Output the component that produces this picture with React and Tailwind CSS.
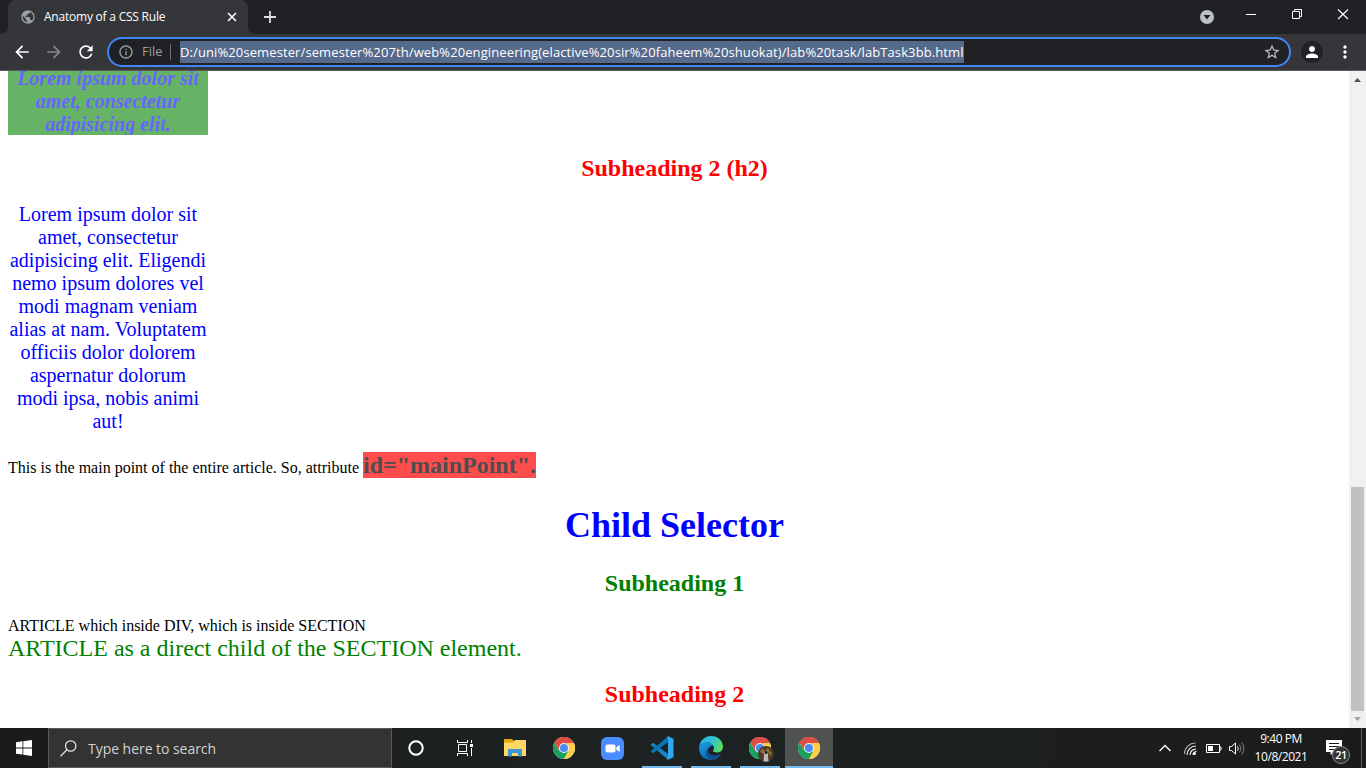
import React from "react";
import { MdArrowBack, MdArrowForward, MdRefresh, MdPublic, MdInfoOutline, MdStarBorder, MdPerson, MdMoreVert } from "react-icons/md";

function ChromeLogo() {
  return (
    <svg width="22" height="22" viewBox="0 0 48 48">
      <circle cx="24" cy="24" r="24" fill="#fff" />
      <path d="M24 24 L3.2 12 A24 24 0 0 1 44.8 12 Z" fill="#dd4f43" />
      <path d="M3.2 12 A24 24 0 0 0 24 48 L34.4 30 L24 24 L13.6 30 Z" fill="#19a15f" />
      <path d="M44.8 12 A24 24 0 0 1 24 48 L34.4 30 L30 13 Z" fill="#ffcd46" />
      <path d="M24 13 H45.3 A24 24 0 0 0 3.2 12 L13.6 30 Z" fill="#dd4f43" />
      <circle cx="24" cy="24" r="11" fill="#f1f1f1" />
      <circle cx="24" cy="24" r="8.8" fill="#4c8bf5" />
    </svg>
  );
}

function CodeLogo() {
  return (
    <svg width="24" height="24" viewBox="0 0 24 24">
      <path d="M1 8.2 L3 6.8 L18 18 V23.7 L1.2 9.2 Z" fill="#1686cb" />
      <path d="M1 15.8 L3 17.2 L18 6 V.3 L1.2 14.8 Z" fill="#0875b9" />
      <path d="M17 .5 L18 .2 L23.5 2.8 V21.2 L18 23.8 L17 23.5 L18 22 V2 Z" fill="#2baaf0" />
    </svg>
  );
}

function EdgeLogo() {
  return (
    <svg width="24" height="24" viewBox="0 0 24 24">
      <defs>
        <linearGradient id="edgeTop" x1="0" y1=".3" x2="1" y2=".6">
          <stop offset="0" stopColor="#2aaee8" />
          <stop offset=".5" stopColor="#2fc5d2" />
          <stop offset="1" stopColor="#62d957" />
        </linearGradient>
        <linearGradient id="edgeLeft" x1="0" y1="0" x2=".6" y2="1">
          <stop offset="0" stopColor="#1b9de2" />
          <stop offset="1" stopColor="#0b63b5" />
        </linearGradient>
      </defs>
      <path d="M.2 11 C1 4 6 0 12 0 C19 0 24 5 24 10.5 C24 14.500 21 16.500 18 16.500 C15.500 16.500 14 15.700 14 15 C14 14.400 15 14 15 12 C15 9 12 6.500 8 6.500 C4 6.500 1.200 9 .2 11 Z" fill="url(#edgeTop)" />
      <path d="M.1 12 C.8 8.500 4 6.500 8 6.500 C11 6.500 13.500 8 14.500 10 C11.500 9 9 11.500 9 14.500 C9 19 14 21.500 21.500 18.500 C19.500 22 16 24 12 24 C5 24 0 19 .1 12 Z" fill="url(#edgeLeft)" />
      <path d="M9 14 C9 19.500 15 21 21.800 17.700 C22.200 17.600 22.300 18 22 18.400 C20 21.500 17 23.500 13.500 23.900 C8 23.500 5 18 8 13.500 C9.300 11.200 12 9.500 14.400 10.300 C11.500 9.800 9 12 9 14 Z" fill="#124f91" />
    </svg>
  );
}

function FolderLogo() {
  return (
    <svg width="22" height="20" viewBox="0 0 22 20">
      <path d="M0 1 H8 L10 3 H22 V18 H0 Z" fill="#e5a50f" />
      <path d="M0 4.500 H9 L11 2 H22 V18 H0 Z" fill="#ffd765" />
      <path d="M4 18.500 V11 H18 V18.500 H14 V15 H8 V18.500 Z" fill="#3e97d5" />
    </svg>
  );
}

function ZoomLogo() {
  return (
    <svg width="23" height="23" viewBox="0 0 23 23">
      <rect width="23" height="23" rx="6" fill="#4a8cff" />
      <rect x="4.500" y="7.500" width="10" height="8" rx="1.800" fill="#fff" />
      <path d="M15.300 10.300 L18.700 7.900 V15.100 L15.300 12.700 Z" fill="#fff" />
    </svg>
  );
}

function TaskItem({ children, open = false }) {
  return (
    <div className="flex h-10 w-[49px] flex-col items-center">
      <div className="flex h-[38px] items-center pt-0.5">{children}</div>
      {open && <div className="h-0.5 w-10 bg-[#76b9ed]" />}
    </div>
  );
}

function TabStrip() {
  return (
    <div className="flex h-[34px] bg-[#202124]">
      <svg width="8" height="34" className="shrink-0"><path d="M0 34 Q8 34 8 26 V34 Z" fill="#35363a" /></svg>
      <div className="flex h-[34px] w-60 items-center rounded-t-lg bg-[#35363a] pl-3">
        <MdPublic className="size-4 text-[#9aa0a6]" />
        <span className="ml-2 w-[175px] whitespace-nowrap text-[12px] tracking-[-0.22px] text-white">Anatomy of a CSS Rule</span>
        <svg width="16" height="16" viewBox="0 0 16 16" className="ml-[5px]" stroke="#fff" strokeWidth="1.600"><path d="M4 4 L12 12 M12 4 L4 12" /></svg>
      </div>
      <svg width="8" height="34" className="shrink-0"><path d="M8 34 Q0 34 0 26 V34 Z" fill="#35363a" /></svg>
      <svg width="14" height="34" className="ml-[7px]" stroke="#dadce0" strokeWidth="1.800"><path d="M1 17 H13 M7 11 V23" /></svg>
      <svg width="166" height="34" className="ml-auto" fill="none">
        <circle cx="7" cy="17" r="7" fill="#bdc1c6" />
        <path d="M3.500 15 H10.500 L7 19.500 Z" fill="#202124" />
        <path d="M46 14.500 H56" stroke="#fff" />
        <path d="M92.500 11.500 H99.500 V18.500 H92.500 Z M94.500 11 V9.500 H101.500 V16.500 H100" stroke="#fff" />
        <path d="M138 9.500 L148 19 M148 9.500 L138 19" stroke="#fff" strokeWidth="1.100" />
      </svg>
    </div>
  );
}

function Toolbar() {
  return (
    <div className="flex h-[37px] items-center border-b border-[#5b5b5f] bg-[#35363a] pl-3">
      <MdArrowBack className="size-5 text-white" />
      <MdArrowForward className="ml-3 size-5 text-[#85868a]" />
      <MdRefresh className="ml-3 size-5 text-white" />
      <div className="ml-[11px] flex h-[30px] w-[1184px] items-center rounded-full border-2 border-[#4285f4] bg-[#202124] pl-[9px]">
        <MdInfoOutline className="size-4 text-[#9aa0a6]" />
        <span className="ml-2 w-[22px] text-[13px] text-[#9aa0a6]">File</span>
        <span className="ml-1.5 h-4 w-px bg-[#6b6e73]" />
        <span className="ml-[9px] h-[22px] w-[784px] whitespace-nowrap bg-[#566a8c] text-[13px] leading-[22px] tracking-[0.105px] text-white">D:/uni%20semester/semester%207th/web%20engineering(elactive%20sir%20faheem%20shuokat)/lab%20task/labTask3bb.html</span>
        <MdStarBorder className="ml-auto mr-2 size-[18px] text-[#bdc1c6]" />
      </div>
      <span className="ml-[10px] flex size-[22px] items-center justify-center rounded-full bg-[#202124]">
        <MdPerson className="size-[18px] text-white" />
      </span>
      <MdMoreVert className="ml-3 size-5 text-white" />
    </div>
  );
}

function Page() {
  return (
    <div className="flex h-[657px] bg-white font-['Liberation_Serif',serif] text-black">
      <main className="h-[657px] w-[1349px] overflow-hidden px-2">
        <div className="h-16 overflow-hidden">
          <p className="-mt-1 w-[200px] bg-[#66b366] text-center text-[20px] font-bold italic leading-[23px] text-[#6666ff]">Lorem ipsum dolor sit amet, consectetur adipisicing elit.</p>
        </div>
        <h2 className="mt-5 text-center text-[24px] font-bold leading-[27px] text-[#ff0000]">Subheading 2 (h2)</h2>
        <p className="mt-[21px] w-[200px] text-center text-[20px] leading-[23px] text-[#0000ff]">Lorem ipsum dolor sit amet, consectetur adipisicing elit. Eligendi nemo ipsum dolores vel modi magnam veniam alias at nam. Voluptatem officiis dolor dolorem aspernatur dolorum modi ipsa, nobis animi aut!</p>
        <p className="mt-[19px] flex h-[26px] items-baseline text-[16px] leading-[26px]">
          <span className="w-[355px] whitespace-nowrap">This is the main point of the entire article. So, attribute </span>
          <strong className="h-[26px] w-[173px] whitespace-nowrap bg-[#ff4d4d] text-[24px] font-bold text-[#4d4d4d]">id="mainPoint".</strong>
        </p>
        <h1 className="mt-[27px] text-center text-[36px] font-bold leading-[41px] text-[#0000ff]">Child Selector</h1>
        <h2 className="mt-6 text-center text-[24px] font-bold leading-[27px] text-[#008000]">Subheading 1</h2>
        <article className="mt-5 text-[16px] leading-[18px]">ARTICLE which inside DIV, which is inside SECTION</article>
        <article className="text-[24px] leading-[27px] text-[#008000]">ARTICLE as a direct child of the SECTION element.</article>
        <h2 className="mt-[19px] text-center text-[24px] font-bold leading-[27px] text-[#ff0000]">Subheading 2</h2>
      </main>
      <div className="flex w-[17px] flex-col items-center bg-[#f1f1f1]">
        <svg width="17" height="17"><path d="M5 11 L8.500 7 L12 11 Z" fill="#505050" /></svg>
        <div className="mt-[399px] h-56 w-[13px] bg-[#c1c1c1]" />
        <svg width="17" height="17"><path d="M5 6 L8.500 10 L12 6 Z" fill="#a3a3a3" /></svg>
      </div>
    </div>
  );
}

function Taskbar() {
  return (
    <div className="flex h-10 bg-linear-to-r from-[#1b1e1f] via-[#1d2223] to-[#1b1b1b]">
      <div className="flex w-12 items-center justify-center bg-[#1b1b1b]">
        <svg width="16" height="16" viewBox="0 0 16 16" fill="#fff"><path d="M0 2.200 L6.500 1.300 V7.500 H0 Z M7.300 1.200 L16 0 V7.500 H7.300 Z M0 8.400 H6.500 V14.600 L0 13.700 Z M7.300 8.400 H16 V16 L7.300 14.800 Z" /></svg>
      </div>
      <div className="flex h-10 w-[344px] items-center border border-[#5a5a5a] bg-[#333333] pl-[11px]">
        <svg width="17" height="17" viewBox="0 0 17 17" fill="none" stroke="#e0e0e0" strokeWidth="1.300"><circle cx="10.700" cy="6" r="5.200" /><path d="M7 9.700 L.5 16.300" /></svg>
        <span className="ml-[11px] whitespace-nowrap text-[14px] tracking-[-0.04px] text-[#d2d2d2]">Type here to search</span>
      </div>
      <div className="flex w-12 items-center justify-center">
        <svg width="16" height="16"><circle cx="8" cy="8" r="6.700" fill="none" stroke="#fff" strokeWidth="2" /></svg>
      </div>
      <div className="flex w-12 items-center justify-center">
        <svg width="17" height="16" fill="none" stroke="#fff" strokeWidth="1"><path d="M1.500 0 V2.500 H11.500 V0 M1.500 16 V13.500 H11.500 V16 M2.500 4.500 H10.500 V11.500 H2.500 Z M15.500 0 V3 M15.500 8 V16" /><path d="M14 4 H17 V7 H14 Z" fill="#fff" stroke="none" /></svg>
      </div>
      <div className="ml-0.5 flex">
        <TaskItem><FolderLogo /></TaskItem>
        <TaskItem><ChromeLogo /></TaskItem>
        <TaskItem><ZoomLogo /></TaskItem>
        <TaskItem open><CodeLogo /></TaskItem>
        <TaskItem open><EdgeLogo /></TaskItem>
        <TaskItem open>
          <div className="relative">
            <ChromeLogo />
            <svg width="16" height="16" viewBox="0 0 16 16" className="absolute -right-[3px] -bottom-[3px]">
              <circle cx="8" cy="8" r="8" fill="#4b3923" />
              <path d="M2 5 L5 2 L6 5 L10 2 L12 5 L14 7 L12 10 L10 6 L4 8 Z" fill="#8d7040" />
              <path d="M6 8 L8 5 L10 8 L10.500 15.500 H5.500 Z" fill="#b9b9b5" />
              <path d="M7 5 H9 V8 H7 Z" fill="#2b2722" />
            </svg>
          </div>
        </TaskItem>
      </div>
      <div className="ml-px flex w-12 flex-col items-center bg-[#505252]">
        <div className="flex h-[38px] items-center pt-0.5"><ChromeLogo /></div>
        <div className="h-0.5 w-12 bg-[#76b9ed]" />
      </div>
      <div className="ml-auto flex items-center">
        <svg width="88" height="40" fill="none" stroke="#fff">
          <path d="M1.500 23 L7 17.500 L12.500 23" strokeWidth="1.400" />
          <g strokeWidth="1.100">
            <path d="M26.500 26 A11 11 0 0 1 37.500 15" stroke="#aaa" />
            <path d="M29 27 A9 9 0 0 1 38 18" />
            <path d="M32 27 A6 6 0 0 1 38 21" />
            <path d="M35 27 A3.500 3.500 0 0 1 38.500 23.500" />
          </g>
          <circle cx="36.500" cy="25.500" r="1.500" fill="#fff" stroke="none" />
          <path d="M48.500 16.500 H61.500 V24.500 H48.500 Z M62 19 H63 V22 H62" />
          <path d="M50 18 H55 V23 H50 Z" fill="#fff" stroke="none" />
          <path d="M71.500 18.500 H73.500 L77.500 15 V26 L73.500 22.500 H71.500 Z" />
          <path d="M79.500 18.500 Q81 20.500 79.500 22.500" />
          <path d="M81.500 16.500 Q84.500 20.500 81.500 24.500 M83.800 14.500 Q88 20.500 83.800 26.500" stroke="#858585" />
        </svg>
        <div className="ml-[5px] flex w-[60px] flex-col items-center whitespace-nowrap text-[12px] leading-[18px] tracking-[-0.45px] text-white">
          <span>9:40 PM</span>
          <span>10/8/2021</span>
        </div>
        <div className="relative ml-[15px] h-10 w-10">
          <svg width="17" height="17" className="mt-3"><path d="M0 0 H16 V12 H8 L4.500 15 V12 H0 Z" fill="#fff" /><path d="M3 3.500 H13 M3 6.500 H13 M3 9.500 H10" stroke="#1b1b1b" /></svg>
          <span className="absolute left-[6px] top-[18px] flex size-[18px] items-center justify-center rounded-full border border-[#8a8a8a] bg-[#333] text-[11px] font-semibold tracking-[-0.5px] text-white">21</span>
          <span className="absolute right-1 top-0 h-10 w-px bg-[#5d5d5d]" />
        </div>
      </div>
    </div>
  );
}

export default function App() {
  return (
    <div className="h-[768px] w-[1366px] overflow-hidden font-['Open_Sans','Noto_Sans',sans-serif]">
      <TabStrip />
      <Toolbar />
      <Page />
      <Taskbar />
    </div>
  );
}
